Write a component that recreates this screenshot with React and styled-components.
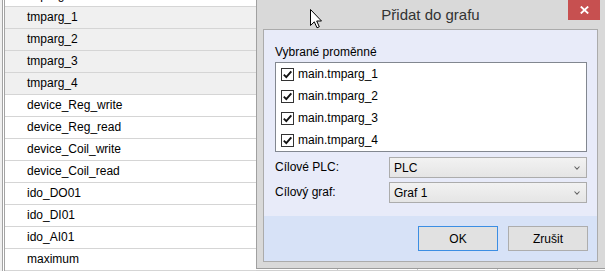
import React from 'react';
import styled, { createGlobalStyle } from 'styled-components';

const Global = createGlobalStyle`
  html, body { margin: 0; padding: 0; background: #fff; overflow: hidden; }
  body { font-family: "Liberation Sans", Arial, sans-serif; font-size: 12px; color: #000; }
  #root { width: 605px; height: 271px; }
`;

const Screen = styled.div`
  position: relative;
  width: 605px;
  height: 271px;
  overflow: hidden;
  display: flex;
  align-items: flex-start;
`;

const TableFrame = styled.div`
  flex: none;
  width: 256px;
  height: 271px;
  box-sizing: border-box;
  background: #f0f0f0;
  padding-left: 2px;
`;

const TableInner = styled.div`
  height: 100%;
  border-left: 3px double #a3a3a3;
  background: #fff;
  overflow: hidden;
`;

const RowList = styled.ul`
  list-style: none;
  margin: -15px 0 0;
  padding: 0;
`;

const Row = styled.li`
  height: 21px;
  line-height: 21px;
  border-bottom: 1px solid #d5d5d5;
  padding-left: 22px;
  white-space: nowrap;
  background: ${p => (p.$shaded ? '#f0f0f0' : '#fff')};
`;

const DialogColumn = styled.div`
  flex: none;
  width: 350px;
  display: flex;
  flex-direction: column;
`;

const Dialog = styled.section`
  height: 269px;
  box-sizing: border-box;
  background: #d9d9d9;
  border-left: 1px solid #a0a0a0;
  border-bottom: 1px solid #9c9c9c;
  padding: 0 8px 6px 6px;
  display: flex;
  flex-direction: column;
`;

const TitleBar = styled.header`
  height: 29px;
  flex: none;
  display: grid;
  grid-template-columns: 1fr auto 1fr;
  align-items: start;
`;

const Title = styled.div`
  grid-column: 2;
  font-size: 15px;
  line-height: 29px;
  color: #333;
  white-space: nowrap;
`;

const CloseButton = styled.div`
  grid-column: 3;
  justify-self: end;
  margin-right: -2px;
  width: 32px;
  height: 20px;
  background: #c75050;
  display: flex;
  align-items: center;
  justify-content: center;
`;

const Client = styled.div`
  flex: 1;
  border: 1px solid #ababab;
  display: flex;
  flex-direction: column;
`;

const Upper = styled.div`
  flex: 1;
  background: #e8ebf9;
  padding: 14px 10px 0 11px;
  display: flex;
  flex-direction: column;
`;

const GroupLabel = styled.div`
  line-height: 16px;
  height: 16px;
  margin-bottom: 2px;
`;

const ListBox = styled.ul`
  list-style: none;
  margin: 0;
  padding: 0;
  height: 90px;
  box-sizing: border-box;
  border: 1px solid #828790;
  background: #fff;
  overflow: hidden;
`;

const Item = styled.li`
  height: 22px;
  display: flex;
  align-items: center;
  padding-left: 5px;
  gap: 4px;
  white-space: nowrap;
`;

const Box = styled.span`
  width: 13px;
  height: 13px;
  box-sizing: border-box;
  border: 1px solid #333;
  background: #fff;
  display: flex;
  align-items: center;
  justify-content: center;
`;

const Fields = styled.div`
  margin-top: 5px;
  display: grid;
  grid-template-columns: 114px 1fr;
  grid-auto-rows: 21px;
  row-gap: 4px;
  align-items: center;
`;

const FieldLabel = styled.label`
  line-height: 21px;
`;

const Combo = styled.div`
  height: 21px;
  box-sizing: border-box;
  border: 1px solid #acacac;
  background: linear-gradient(#f2f2f2, #e5e5e5);
  display: flex;
  align-items: center;
  justify-content: space-between;
  padding: 0 6px 0 4px;
`;

const Lower = styled.div`
  flex: none;
  height: 45px;
  box-sizing: border-box;
  background: #d7e2f7;
  display: flex;
  justify-content: flex-end;
  align-items: flex-start;
  gap: 10px;
  padding: 10px 9px 0 0;
`;

const Button = styled.button`
  width: 80px;
  height: 25px;
  box-sizing: border-box;
  margin: 0;
  padding: 0;
  font: inherit;
  color: #000;
  background: #e1e1e1;
  border: 1px solid ${p => (p.$default ? '#3c8ee3' : '#adadad')};
`;

const UnderStrip = styled.div`
  height: 2px;
  box-sizing: border-box;
  background: #fff;
  border-bottom: 1px solid #d0d0d0;
  display: grid;
  grid-template-columns: 82px 80px 80px 80px 80px;
`;

const UnderCell = styled.div`
  border-right: 1px solid #c8c8c8;
`;

const Cursor = styled.svg`
  position: absolute;
  left: 310px;
  top: 9px;
`;

const rows = [
  ['tmparg', false],
  ['tmparg_1', true],
  ['tmparg_2', true],
  ['tmparg_3', true],
  ['tmparg_4', true],
  ['device_Reg_write', false],
  ['device_Reg_read', false],
  ['device_Coil_write', false],
  ['device_Coil_read', false],
  ['ido_DO01', false],
  ['ido_DI01', false],
  ['ido_AI01', false],
  ['maximum', false],
];

const items = ['main.tmparg_1', 'main.tmparg_2', 'main.tmparg_3', 'main.tmparg_4'];

const Check = () => (
  <Box>
    <svg width="11" height="11" viewBox="0 0 11 11">
      <path d="M1.8 5.6 L4.3 8.1 L9.3 2.4" fill="none" stroke="#111" strokeWidth="1.9" />
    </svg>
  </Box>
);

const Chevron = () => (
  <svg width="6" height="4" viewBox="0 0 6 4">
    <path d="M0.5 0.5 L3 3.2 L5.5 0.5" fill="none" stroke="#666" strokeWidth="1.1" />
  </svg>
);

export default function App() {
  return (
    <>
      <Global />
      <Screen>
        <TableFrame>
          <TableInner>
            <RowList>
              {rows.map(([name, shaded]) => (
                <Row key={name} $shaded={shaded}>{name}</Row>
              ))}
            </RowList>
          </TableInner>
        </TableFrame>
        <DialogColumn>
          <Dialog>
            <TitleBar>
              <Title>Přidat do grafu</Title>
              <CloseButton>
                <svg width="9" height="8" viewBox="0 0 9 8">
                  <path d="M0.8 0.5 L8.2 7.5 M8.2 0.5 L0.8 7.5" stroke="#fff" strokeWidth="1.8" />
                </svg>
              </CloseButton>
            </TitleBar>
            <Client>
              <Upper>
                <GroupLabel>Vybrané proměnné</GroupLabel>
                <ListBox>
                  {items.map(t => (
                    <Item key={t}>
                      <Check />
                      {t}
                    </Item>
                  ))}
                </ListBox>
                <Fields>
                  <FieldLabel>Cílové PLC:</FieldLabel>
                  <Combo>
                    <span>PLC</span>
                    <Chevron />
                  </Combo>
                  <FieldLabel>Cílový graf:</FieldLabel>
                  <Combo>
                    <span>Graf 1</span>
                    <Chevron />
                  </Combo>
                </Fields>
              </Upper>
              <Lower>
                <Button $default>OK</Button>
                <Button>Zrušit</Button>
              </Lower>
            </Client>
          </Dialog>
          <UnderStrip>
            <UnderCell />
            <UnderCell />
            <UnderCell />
            <UnderCell />
            <UnderCell />
          </UnderStrip>
        </DialogColumn>
        <Cursor width="13" height="20" viewBox="0 0 13 20">
          <path d="M0.5 0.5 L0.5 16.5 L4.3 12.8 L7 18.8 L9.3 17.8 L6.7 12 L11.5 12 Z" fill="#fff" stroke="#000" strokeWidth="1" strokeLinejoin="miter" />
        </Cursor>
      </Screen>
    </>
  );
}
